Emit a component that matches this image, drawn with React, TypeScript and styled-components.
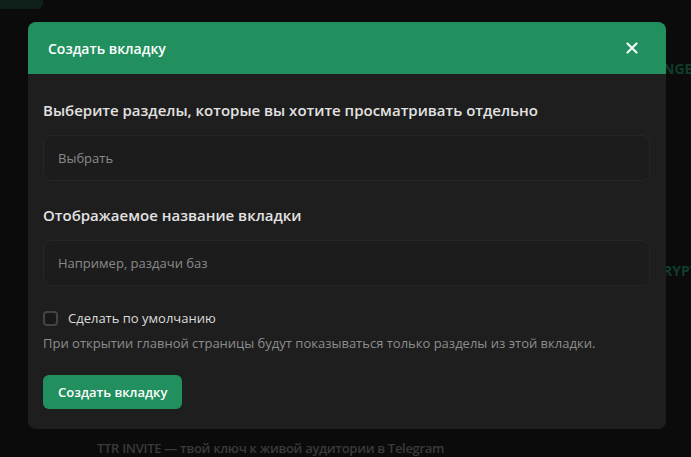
import React from 'react'
import styled, { createGlobalStyle } from 'styled-components'

const GlobalStyle = createGlobalStyle`
    html, body {
        margin: 0;
        padding: 0;
        background: #0a0a0a;
        font-family: "Open Sans", "Noto Sans", sans-serif;
        overflow: hidden;
    }
`

const Page = styled.div`
    position: relative;
    width: 691px;
    height: 457px;
    overflow: hidden;
    background: #0b0b0c;
`

const TopBadge = styled.div`
    position: absolute;
    left: -10px;
    top: -20px;
    width: 53px;
    height: 29px;
    border-radius: 6px;
    background: #0d1f18;
`

const SideText = styled.div<{ top: number }>`
    position: absolute;
    left: 663px;
    top: ${p => p.top}px;
    font-size: 14px;
    font-weight: 700;
    color: #0f3d2a;
    white-space: nowrap;
`

const FooterText = styled.div`
    position: absolute;
    left: 97px;
    top: 439px;
    font-size: 13px;
    font-weight: 600;
    letter-spacing: -0.3px;
    color: #3a3a3a;
    white-space: nowrap;
`

const Overlay = styled.div`
    position: absolute;
    inset: 0;
    padding: 22px 0 0 28px;
`

const Modal = styled.div`
    width: 638px;
    background: #1e1e1e;
    border-radius: 8px;
    overflow: hidden;
`

const Header = styled.div`
    height: 52px;
    background: #21905e;
    display: flex;
    align-items: center;
    justify-content: space-between;
    padding: 0 28px 0 20px;
`

const HeaderTitle = styled.div`
    font-size: 14px;
    font-weight: 600;
    color: #ffffff;
`

const CloseButton = styled.button`
    border: 0;
    background: none;
    padding: 0;
    display: flex;
    color: #f4f4f4;
    cursor: pointer;
`

const Body = styled.div`
    padding: 26px 16px 20px 15px;
    display: flex;
    flex-direction: column;
`

const Label = styled.div<{ mt?: number }>`
    font-size: 15px;
    font-weight: 600;
    line-height: 20px;
    color: #e2e2e2;
    margin-top: ${p => p.mt ?? 0}px;
`

const Field = styled.input`
    margin-top: 15px;
    height: 46px;
    box-sizing: border-box;
    width: 100%;
    border: 1px solid #262626;
    border-radius: 8px;
    background: #1c1c1c;
    padding: 0 14px;
    font-family: inherit;
    font-size: 13px;
    color: #e0e0e0;
    outline: none;

    &::placeholder {
        color: #8a8a8a;
    }
`

const CheckRow = styled.label`
    margin-top: 22px;
    display: flex;
    align-items: center;
    gap: 10px;
    height: 20px;
    font-size: 13px;
    color: #dcdcdc;
`

const Box = styled.span`
    width: 15px;
    height: 15px;
    box-sizing: border-box;
    border: 2px solid #444444;
    border-radius: 4px;
    background: #191919;
`

const Hint = styled.div`
    margin-top: 6px;
    font-size: 13px;
    line-height: 18px;
    color: #8d8d8d;
`

const SubmitButton = styled.button`
    margin-top: 23px;
    align-self: flex-start;
    height: 34px;
    padding: 0 15px;
    border: 0;
    border-radius: 6px;
    background: #21905e;
    font-family: inherit;
    font-size: 13px;
    font-weight: 600;
    color: #ffffff;
    cursor: pointer;
`

const App: React.FC = () => {
    return (
        <Page>
            <GlobalStyle />
            <TopBadge />
            <SideText top={59}>NGE</SideText>
            <SideText top={261}>RYPT</SideText>
            <FooterText>TTR INVITE — твой ключ к живой аудитории в Telegram</FooterText>
            <Overlay>
                <Modal>
                    <Header>
                        <HeaderTitle>Создать вкладку</HeaderTitle>
                        <CloseButton aria-label="close">
                            <svg width="12" height="12" viewBox="0 0 12 12">
                                <path d="M1.5 1.5 L10.5 10.5 M10.5 1.5 L1.5 10.5" stroke="currentColor" strokeWidth="2.2" strokeLinecap="round" />
                            </svg>
                        </CloseButton>
                    </Header>
                    <Body>
                        <Label>Выберите разделы, которые вы хотите просматривать отдельно</Label>
                        <Field placeholder="Выбрать" readOnly />
                        <Label mt={24}>Отображаемое название вкладки</Label>
                        <Field placeholder="Например, раздачи баз" />
                        <CheckRow>
                            <Box />
                            Сделать по умолчанию
                        </CheckRow>
                        <Hint>При открытии главной страницы будут показываться только разделы из этой вкладки.</Hint>
                        <SubmitButton>Создать вкладку</SubmitButton>
                    </Body>
                </Modal>
            </Overlay>
        </Page>
    )
}

export default App
